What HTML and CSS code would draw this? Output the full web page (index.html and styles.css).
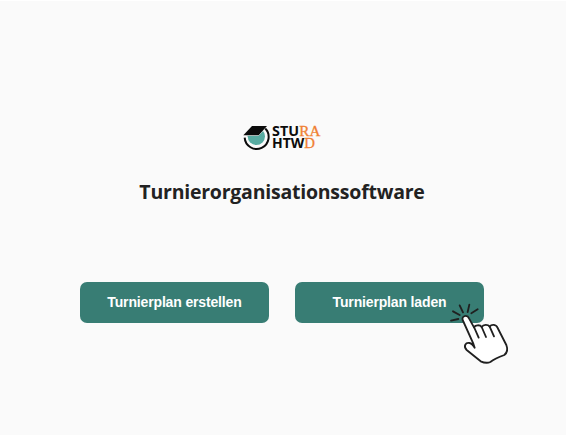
FILE: index.html
```html
<!DOCTYPE html>
<html lang="de">
<head>
<meta charset="utf-8">
<title>Turnierorganisationssoftware</title>
<link rel="stylesheet" href="styles.css">
</head>
<body>
<main class="start">
  <svg class="logo" viewBox="0 0 276 120" role="img" aria-label="STURA HTWD">
    <circle cx="61" cy="55" r="26" fill="#58aca2"/>
    <path d="M26 59A36 36 0 1 0 87 31" fill="none" stroke="#0b0b0b" stroke-width="6"/>
    <path d="M48 24H93L68 52H22Z" fill="#0b0b0b" stroke="#fafafa" stroke-width="3" paint-order="stroke"/>
    <text class="logo-sans" x="108" y="55" textLength="81" lengthAdjust="spacingAndGlyphs">STU</text>
    <text class="logo-sans" x="108" y="91" textLength="97" lengthAdjust="spacingAndGlyphs">HTW</text>
    <text class="logo-serif" x="190" y="55" textLength="63" lengthAdjust="spacingAndGlyphs">RA</text>
    <text class="logo-serif" x="205" y="91" textLength="32" lengthAdjust="spacingAndGlyphs">D</text>
  </svg>
  <h1 class="title">Turnierorganisationssoftware</h1>
  <div class="actions">
    <button class="button" type="button">Turnierplan erstellen</button>
    <button class="button" type="button">Turnierplan laden
      <svg class="pointer" viewBox="0 0 240 282" aria-hidden="true">
        <path class="hand" d="M100 203L68 132C64 119 82 115 87 127L102 154C105 146 121 146 125 153C130 145 144 145 149 152C155 144 169 145 173 156L199 207C204 220 202 230 193 237C177 243 164 248 151 258C140 263 131 260 122 256L80 222C69 211 77 198 89 201C95 202 99 207 104 215Z"/>
        <path class="crease" d="M102 153L116 185M125 153L138 183M149 152L162 181"/>
        <path class="rays" d="M33 134L55 129M39 106L59 117M59 88L69 109M88 86L83 108M113 100L94 112"/>
      </svg>
    </button>
  </div>
</main>
</body>
</html>
```

FILE: styles.css
```css
* {
  box-sizing: border-box;
}

body {
  margin: 0;
  background: #fafafa;
}

.start {
  display: flex;
  flex-direction: column;
  align-items: center;
  height: 435px;
  padding: 117px 2px 0 0;
  border-top: 1px solid #fff;
}

.logo {
  display: block;
  width: 92px;
  height: 40px;
}

.logo-sans {
  font: bold 42px "Open Sans", sans-serif;
  fill: #0b0b0b;
}

.logo-serif {
  font: 45px "Liberation Serif", serif;
  fill: #f08032;
  stroke: #f08032;
  stroke-width: 1;
}

.title {
  margin: 20px 0 0;
  font: bold 19.5px/28px "Open Sans", "Noto Sans", sans-serif;
  letter-spacing: -0.23px;
  color: #222;
  white-space: nowrap;
}

.actions {
  display: flex;
  gap: 26px;
  margin-top: 76px;
}

.button {
  position: relative;
  width: 189px;
  height: 41px;
  padding: 0 0 2px;
  border: 0;
  border-radius: 7px;
  background: #387d74;
  color: #fff;
  font: bold 14px/20px "Liberation Sans", Arial, sans-serif;
  letter-spacing: -0.15px;
}

.pointer {
  position: absolute;
  left: 145px;
  top: -6px;
  width: 80px;
  height: 94px;
}

.pointer path {
  fill: none;
  stroke: #202020;
  stroke-width: 5.5;
  stroke-linecap: round;
  stroke-linejoin: round;
}

.pointer .hand {
  fill: #fff;
}
```
